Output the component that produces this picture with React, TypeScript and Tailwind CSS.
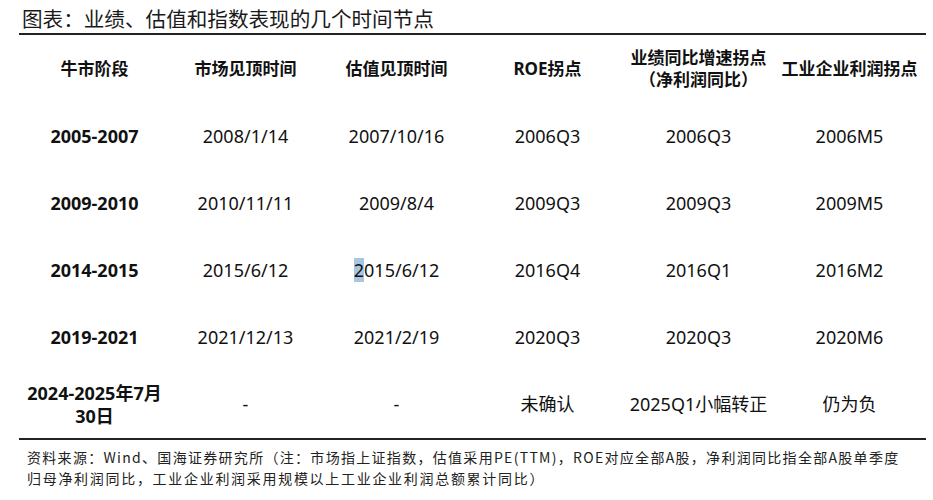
import React from 'react';

const headers: string[][] = [
  ['牛市阶段'],
  ['市场见顶时间'],
  ['估值见顶时间'],
  ['ROE拐点'],
  ['业绩同比增速拐点', '（净利润同比）'],
  ['工业企业利润拐点'],
];

const rows: string[][] = [
  ['2005-2007', '2008/1/14', '2007/10/16', '2006Q3', '2006Q3', '2006M5'],
  ['2009-2010', '2010/11/11', '2009/8/4', '2009Q3', '2009Q3', '2009M5'],
  ['2014-2015', '2015/6/12', '2015/6/12', '2016Q4', '2016Q1', '2016M2'],
  ['2019-2021', '2021/12/13', '2021/2/19', '2020Q3', '2020Q3', '2020M6'],
  ['2024-2025年7月\n30日', '-', '-', '未确认', '2025Q1小幅转正', '仍为负'],
];

const font = "font-['Noto_Sans','Noto_Sans_CJK_SC',sans-serif]";

const Cell: React.FC<{ text: string; bold?: boolean; mark?: boolean }> = ({ text, bold, mark }) => {
  const lines = text.split('\n');
  return (
    <div className={`h-[67px] flex flex-col items-center justify-center text-center text-[18px] leading-[23px] text-[#111] ${bold ? 'font-bold' : ''}`}>
      {lines.map((l, i) =>
        mark && i === 0 ? (
          <span key={i}>
            <span className="bg-[#a9c6e0]">{l.charAt(0)}</span>
            {l.slice(1)}
          </span>
        ) : (
          <span key={i}>{l}</span>
        )
      )}
    </div>
  );
};

export default function App() {
  return (
    <div className={`w-[933px] h-[500px] bg-white overflow-hidden ${font}`}>
      <div className="pl-[22px] pt-[5px] h-[33px] text-[20.6px] leading-[26px] text-[#1a1a1a] font-['Noto_Sans_CJK_SC',sans-serif]">
        图表：业绩、估值和指数表现的几个时间节点
      </div>
      <div className="ml-[19px] w-[907px] border-t-2 border-[#222]" />

      <div className="ml-[19px] w-[906px] grid grid-cols-6">
        {headers.map((h, i) => (
          <div
            key={i}
            className="h-[68px] flex flex-col items-center justify-center text-center font-bold text-[17px] leading-[22px] text-[#111]"
          >
            {h.map((l, j) => (
              <span key={j}>{l}</span>
            ))}
          </div>
        ))}
        {rows.map((r, ri) =>
          r.map((c, ci) => (
            <Cell key={`${ri}-${ci}`} text={c} bold={ci === 0} mark={ri === 2 && ci === 2} />
          ))
        )}
      </div>
      <div className="ml-[19px] w-[907px] border-t-2 border-[#222]" />

      <div className="pl-[27px] pt-[7px] text-[14px] leading-[21px] text-[#222] font-['Noto_Sans_CJK_SC',sans-serif]">
        <div className="whitespace-nowrap tracking-[1.3px]">
          资料来源：Wind、国海证券研究所（注：市场指上证指数，估值采用PE(TTM)，ROE对应全部A股，净利润同比指全部A股单季度
        </div>
        <div className="whitespace-nowrap tracking-[1.7px]">归母净利润同比，工业企业利润采用规模以上工业企业利润总额累计同比）</div>
      </div>
    </div>
  );
}
